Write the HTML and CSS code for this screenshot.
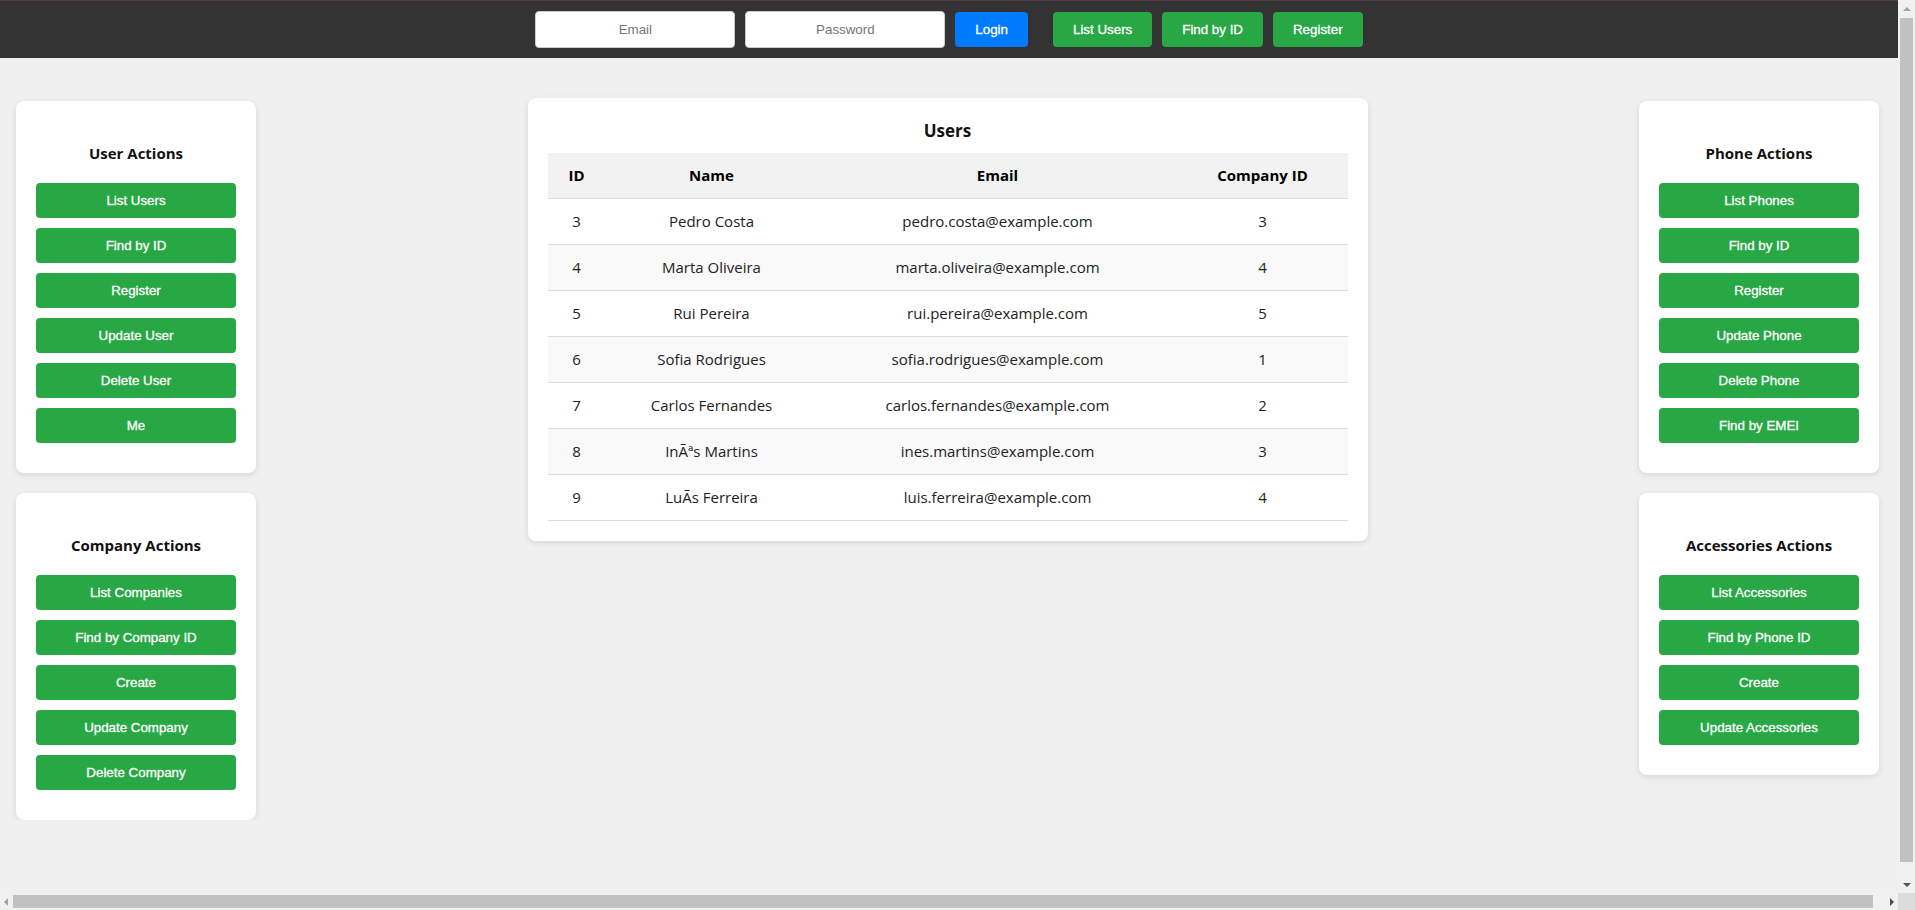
FILE: index.html
```html
<!DOCTYPE html>
<html lang="en">
<head>
<meta charset="utf-8">
<title>Users</title>
<link rel="stylesheet" href="styles.css">
</head>
<body>
<header class="topbar">
  <form class="login">
    <input class="field" type="email" placeholder="Email">
    <input class="field" type="password" placeholder="Password">
    <button type="button" class="btn btn-blue">Login</button>
  </form>
  <nav class="quick">
    <button type="button" class="btn btn-green">List Users</button>
    <button type="button" class="btn btn-green">Find by ID</button>
    <button type="button" class="btn btn-green">Register</button>
  </nav>
</header>

<main class="layout">
  <aside class="sidebar">
    <section class="card panel">
      <h3 class="panel-title">User Actions</h3>
      <div class="panel-actions">
        <button type="button" class="btn btn-green">List Users</button>
        <button type="button" class="btn btn-green">Find by ID</button>
        <button type="button" class="btn btn-green">Register</button>
        <button type="button" class="btn btn-green">Update User</button>
        <button type="button" class="btn btn-green">Delete User</button>
        <button type="button" class="btn btn-green">Me</button>
      </div>
    </section>
    <section class="card panel">
      <h3 class="panel-title">Company Actions</h3>
      <div class="panel-actions">
        <button type="button" class="btn btn-green">List Companies</button>
        <button type="button" class="btn btn-green">Find by Company ID</button>
        <button type="button" class="btn btn-green">Create</button>
        <button type="button" class="btn btn-green">Update Company</button>
        <button type="button" class="btn btn-green">Delete Company</button>
      </div>
    </section>
  </aside>

  <section class="card content">
    <h3 class="content-title">Users</h3>
    <table class="users">
      <colgroup>
        <col class="c-id"><col class="c-name"><col class="c-email"><col class="c-company">
      </colgroup>
      <thead>
        <tr><th>ID</th><th>Name</th><th>Email</th><th>Company ID</th></tr>
      </thead>
      <tbody>
        <tr><td>3</td><td>Pedro Costa</td><td>pedro.costa@example.com</td><td>3</td></tr>
        <tr><td>4</td><td>Marta Oliveira</td><td>marta.oliveira@example.com</td><td>4</td></tr>
        <tr><td>5</td><td>Rui Pereira</td><td>rui.pereira@example.com</td><td>5</td></tr>
        <tr><td>6</td><td>Sofia Rodrigues</td><td>sofia.rodrigues@example.com</td><td>1</td></tr>
        <tr><td>7</td><td>Carlos Fernandes</td><td>carlos.fernandes@example.com</td><td>2</td></tr>
        <tr><td>8</td><td>InÃªs Martins</td><td>ines.martins@example.com</td><td>3</td></tr>
        <tr><td>9</td><td>LuÃ&#173;s Ferreira</td><td>luis.ferreira@example.com</td><td>4</td></tr>
      </tbody>
    </table>
  </section>

  <aside class="sidebar">
    <section class="card panel">
      <h3 class="panel-title">Phone Actions</h3>
      <div class="panel-actions">
        <button type="button" class="btn btn-green">List Phones</button>
        <button type="button" class="btn btn-green">Find by ID</button>
        <button type="button" class="btn btn-green">Register</button>
        <button type="button" class="btn btn-green">Update Phone</button>
        <button type="button" class="btn btn-green">Delete Phone</button>
        <button type="button" class="btn btn-green">Find by EMEI</button>
      </div>
    </section>
    <section class="card panel">
      <h3 class="panel-title">Accessories Actions</h3>
      <div class="panel-actions">
        <button type="button" class="btn btn-green">List Accessories</button>
        <button type="button" class="btn btn-green">Find by Phone ID</button>
        <button type="button" class="btn btn-green">Create</button>
        <button type="button" class="btn btn-green">Update Accessories</button>
      </div>
    </section>
  </aside>
</main>

<div class="scroll-v" aria-hidden="true">
  <span class="arrow arrow-up"></span>
  <span class="thumb"></span>
  <span class="arrow arrow-down"></span>
</div>
<div class="scroll-h" aria-hidden="true">
  <span class="arrow arrow-left"></span>
  <span class="thumb"></span>
  <span class="arrow arrow-right"></span>
</div>
<div class="scroll-corner" aria-hidden="true"></div>
</body>
</html>
```

FILE: styles.css
```css
html, body {
  margin: 0;
  padding: 0;
}

body {
  background: #f0f0f0;
  font-family: "Open Sans", "Noto Sans", sans-serif;
  color: #222;
  padding-right: 17px; /* room taken by the vertical scrollbar */
}

/* ---------- top bar ---------- */
.topbar {
  display: flex;
  justify-content: center;
  align-items: center;
  gap: 25px;
  background: #333333;
  border-top: 1px solid #553c43;
  padding: 10px 0;
}

.login,
.quick {
  display: flex;
  align-items: center;
  gap: 10px;
  margin: 0;
}

.field {
  width: 200px;
  height: 37px;
  box-sizing: border-box;
  padding: 10px;
  border: 1px solid #cccccc;
  border-radius: 4px;
  background: #fff;
  font-family: "Liberation Sans", Arial, sans-serif;
  font-size: 13.333px;
  text-align: center;
  color: #222;
}

.field::placeholder {
  color: #757575;
}

.btn {
  font-family: "Liberation Sans", Arial, sans-serif;
  font-size: 13.333px;
  line-height: 15px;
  color: #ffffff;
  -webkit-text-stroke: 0.3px #ffffff;
  border: none;
  border-radius: 4px;
  padding: 10px 20px;
  cursor: pointer;
  white-space: nowrap;
}

.btn-blue {
  background: #007bff;
}

.btn-green {
  background: #28a745;
}

/* ---------- layout ---------- */
.layout {
  display: flex;
  justify-content: space-between;
  align-items: flex-start;
  padding: 40px 19px 0 16px;
}

.sidebar {
  width: 240px;
  display: flex;
  flex-direction: column;
  gap: 20px;
  margin-top: 3px;
}

.card {
  background: #ffffff;
  border-radius: 8px;
  box-shadow: 0 2px 6px rgba(0, 0, 0, 0.1);
}

.panel {
  box-sizing: border-box;
  width: 240px;
  padding: 20px 20px 30px;
}

.panel-title {
  margin: 21px 0 19px;
  font-size: 15px;
  line-height: 22px;
  font-weight: 700;
  text-align: center;
  color: #111;
}

.panel-actions {
  display: flex;
  flex-direction: column;
  gap: 10px;
}

.panel-actions .btn {
  width: 100%;
  padding: 10px 0;
}

/* ---------- users table ---------- */
.content {
  width: 840px;
  box-sizing: border-box;
  padding: 20px;
}

.content-title {
  margin: 0 0 10px;
  font-size: 17px;
  line-height: 25px;
  font-weight: 700;
  text-align: center;
  color: #111;
}

.users {
  width: 100%;
  border-collapse: collapse;
  table-layout: fixed;
}

.c-id { width: 58px; }
.c-name { width: 212px; }
.c-email { width: 360px; }
.c-company { width: 170px; }

.users th,
.users td {
  padding: 12px;
  font-size: 15px;
  line-height: 21px;
  text-align: center;
  border-bottom: 1px solid #dddddd;
}

.users th {
  background: #f2f2f2;
  font-weight: 700;
  color: #000;
}

.users tbody tr:nth-child(even) td {
  background: #f9f9f9;
}

/* ---------- window scrollbars ---------- */
.scroll-v,
.scroll-h {
  position: fixed;
  display: flex;
  background: #f1f1f1;
}

.scroll-v {
  top: 0;
  right: 0;
  bottom: 17px;
  width: 17px;
  flex-direction: column;
}

.scroll-h {
  left: 0;
  right: 17px;
  bottom: 0;
  height: 17px;
}

.scroll-corner {
  position: fixed;
  right: 0;
  bottom: 0;
  width: 17px;
  height: 17px;
  background: #dcdcdc;
}

.thumb {
  background: #c1c1c1;
}

.scroll-v .thumb {
  flex: 1;
  margin: 1px 2px 14px;
}

.scroll-h .thumb {
  flex: 1;
  margin: 2px 13px 2px 1px;
}

.arrow {
  display: flex;
  align-items: center;
  justify-content: center;
}

.scroll-v .arrow {
  height: 17px;
}

.scroll-h .arrow {
  width: 12px;
}

.arrow::before {
  content: "";
  border: 4px solid transparent;
}

.arrow-up::before {
  border-top-width: 0;
  border-bottom-color: #a3a3a3;
}

.arrow-down::before {
  border-bottom-width: 0;
  border-top-color: #505050;
}

.arrow-left::before {
  border-left-width: 0;
  border-right-color: #a3a3a3;
  border-top-width: 4px;
  border-bottom-width: 4px;
}

.arrow-right::before {
  border-right-width: 0;
  border-left-color: #505050;
}
```
